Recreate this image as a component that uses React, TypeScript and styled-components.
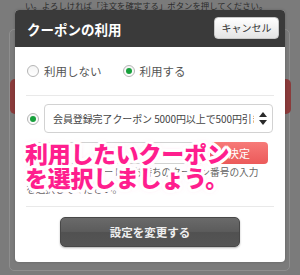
import React, { FC } from 'react'
import styled, { createGlobalStyle, css } from 'styled-components'

const GlobalStyle = createGlobalStyle`
  html, body {
    margin: 0;
    padding: 0;
    background: #7b7b7b;
  }
  body {
    font-family: "Noto Sans CJK JP", "Noto Sans", sans-serif;
  }
`

const Screen = styled.div`
  position: relative;
  width: 300px;
  height: 275px;
  overflow: hidden;
  background: #7b7b7b;
`

/* dimmed page behind the dialog */
const PageText = styled.div`
  padding: 0 0 0 25px;
  height: 12px;
  font-size: 8.4px;
  line-height: 11px;
  color: #2b2b2b;
  white-space: nowrap;
`

const PageCard = styled.div`
  margin: 17px 0 0 9px;
  width: 281px;
  height: 242px;
  border: 1px solid #8e8e8e;
  border-radius: 5px;
  padding: 49px 0 0 0;
  box-sizing: border-box;
`

const PageRedButton = styled.div`
  height: 35px;
  margin: 0 -2px 0 0;
  background: #8a3b3b;
  border-radius: 5px;
`

const PageBox = styled.div`
  margin: 22px 4px 0 auto;
  width: 20px;
  height: 30px;
  border: 1px solid #8c8c8c;
  border-radius: 3px;
`

/* dialog */
const Dialog = styled.div`
  position: absolute;
  top: 10px;
  left: 15px;
  width: 270px;
  background: #fff;
  border-radius: 4px;
  overflow: hidden;
  box-shadow: 0 0 3px rgba(0, 0, 0, 0.2);
`

const Header = styled.div`
  height: 37px;
  background: #3a3a3a;
  display: flex;
  align-items: center;
  justify-content: space-between;
  padding: 0 6px 0 12px;
`

const Title = styled.div`
  color: #fff;
  font-size: 13.5px;
  font-weight: 700;
`

const CancelButton = styled.div`
  width: 65px;
  height: 22px;
  margin-top: -2px;
  box-sizing: border-box;
  border-radius: 4px;
  background: linear-gradient(#ffffff, #e4e4e4);
  border: 1px solid #c8c8c8;
  display: flex;
  align-items: center;
  justify-content: center;
  font-size: 10px;
  color: #333;
`

const Body = styled.div`
  padding: 0 11px 15px 11px;
`

const RadioRow = styled.div`
  height: 48px;
  display: flex;
  align-items: center;
  padding-left: 1px;
  font-size: 11.5px;
  color: #555;
`

const RadioOption = styled.label`
  display: flex;
  align-items: center;
  gap: 5px;
  margin-right: 21px;
`

const Radio = styled.span<{ checked?: boolean }>`
  flex: none;
  width: 12px;
  height: 12px;
  box-sizing: border-box;
  border-radius: 50%;
  border: 1px solid #b5b5b5;
  background: linear-gradient(#f4f4f4, #ffffff);
  display: flex;
  align-items: center;
  justify-content: center;
  ${({ checked }) =>
    checked &&
    css`
      &::after {
        content: '';
        width: 6px;
        height: 6px;
        border-radius: 50%;
        background: #17a03c;
      }
    `}
`

const Divider = styled.div`
  height: 1px;
  background: #e9e9e9;
`

const CouponRow = styled.div`
  margin-top: 8px;
  display: flex;
  align-items: center;
  gap: 5px;
  padding-left: 1px;
`

const Select = styled.div`
  width: 229px;
  height: 29px;
  box-sizing: border-box;
  border: 1px solid #d2d2d2;
  border-radius: 4px;
  display: flex;
  align-items: center;
  padding: 0 5px 0 8px;
  gap: 5px;
`

const SelectText = styled.div`
  flex: 1;
  overflow: hidden;
  white-space: nowrap;
  font-size: 10px;
  letter-spacing: -0.1px;
  color: #444;
`

const CodeRow = styled.div`
  margin-top: 9px;
  display: flex;
  align-items: center;
  gap: 6px;
`

const CodeInput = styled.div`
  width: 178px;
  height: 22px;
  box-sizing: border-box;
  border: 1px solid #d2d2d2;
  border-radius: 3px;
`

const DecideButton = styled.div`
  width: 58px;
  height: 22px;
  border-radius: 4px;
  background: linear-gradient(#f77a78, #ec5a5a);
  color: #fff;
  font-size: 11px;
  display: flex;
  align-items: center;
  justify-content: center;
`

const Note = styled.div`
  font-size: 9.7px;
  line-height: 17px;
  color: #666;
  margin-bottom: 8px;
  white-space: nowrap;
`

const SubmitButton = styled.div`
  margin: 10px auto 0;
  width: 180px;
  height: 30px;
  box-sizing: border-box;
  border-radius: 5px;
  border: 1px solid #484848;
  background: linear-gradient(#6a6a6a 0%, #5c5c5c 48%, #515151 52%, #555555 100%);
  box-shadow: 0 1px 2px rgba(0, 0, 0, 0.3);
  color: #eee;
  font-size: 11.5px;
  font-weight: 700;
  display: flex;
  align-items: center;
  justify-content: center;
`

/* magenta caption laid over the screenshot */
const Caption = styled.div`
  position: absolute;
  left: 25px;
  top: 141px;
  font-size: 23px;
  line-height: 24px;
  font-weight: 900;
  color: #ff1e8e;
  white-space: nowrap;
  letter-spacing: -0.3px;
  text-shadow:
    3px 0 0 #fff, -3px 0 0 #fff, 0 3px 0 #fff, 0 -3px 0 #fff,
    2.1px 2.1px 0 #fff, -2.1px 2.1px 0 #fff, 2.1px -2.1px 0 #fff, -2.1px -2.1px 0 #fff,
    2.8px 1.2px 0 #fff, -2.8px 1.2px 0 #fff, 2.8px -1.2px 0 #fff, -2.8px -1.2px 0 #fff,
    1.2px 2.8px 0 #fff, -1.2px 2.8px 0 #fff, 1.2px -2.8px 0 #fff, -1.2px -2.8px 0 #fff,
    0 0 5px rgba(255, 120, 190, 0.6);
`

const SortArrows: FC = () => (
  <svg width="8" height="13" viewBox="0 0 8 13">
    <path d="M4 0 L8 5 L0 5 Z" fill="#2a2a2a" />
    <path d="M0 8 L8 8 L4 13 Z" fill="#2a2a2a" />
  </svg>
)

const App: FC = () => {
  return (
    <Screen>
      <GlobalStyle />
      <PageText>い。よろしければ「注文を確定する」ボタンを押してください。</PageText>
      <PageCard>
        <PageRedButton />
        <PageBox />
      </PageCard>

      <Dialog>
        <Header>
          <Title>クーポンの利用</Title>
          <CancelButton>キャンセル</CancelButton>
        </Header>
        <Body>
          <RadioRow>
            <RadioOption>
              <Radio />
              利用しない
            </RadioOption>
            <RadioOption>
              <Radio checked />
              利用する
            </RadioOption>
          </RadioRow>
          <Divider />
          <CouponRow>
            <Radio checked />
            <Select>
              <SelectText>会員登録完了クーポン 5000円以上で500円引き</SelectText>
              <SortArrows />
            </Select>
          </CouponRow>
          <CodeRow>
            <CodeInput />
            <DecideButton>決定</DecideButton>
          </CodeRow>
          <Note>
            メールに記載のコードやお持ちのクーポン番号の入力
            <br />
            を選択してください。
          </Note>
          <Divider />
          <SubmitButton>設定を変更する</SubmitButton>
        </Body>
      </Dialog>

      <Caption>
        利用したいクーポン
        <br />
        を選択しましょう。
      </Caption>
    </Screen>
  )
}

export default App
